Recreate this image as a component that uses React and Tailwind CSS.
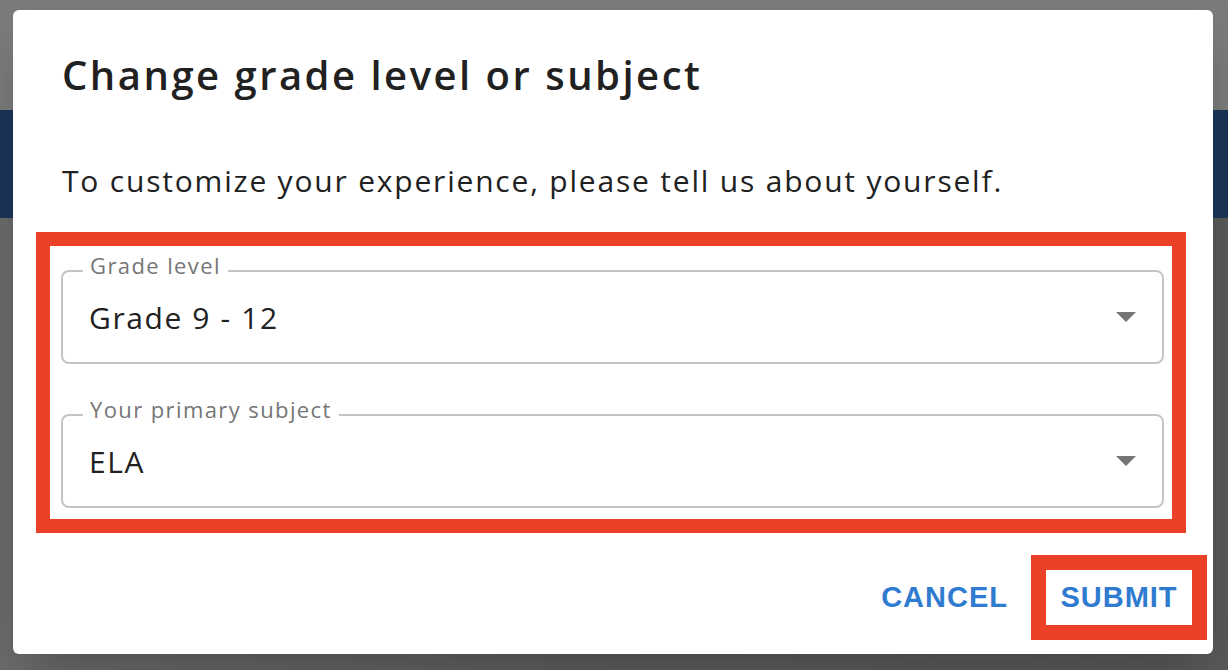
import React from "react";

const Caret = () => (
  <svg width="20" height="10" viewBox="0 0 20 10" className="shrink-0">
    <path d="M0 0 L20 0 L10 10 Z" fill="#757575" />
  </svg>
);

const OutlinedSelect = ({ label, value }) => (
  <div className="relative h-[94px] rounded-[8px] border-2 border-[#c4c4c4] flex items-center pl-[26px] pr-[26px]">
    <span className="absolute -top-[22px] left-[20px] bg-white px-[7px] text-[22px] leading-[30px] tracking-[1.4px] text-[#767676]">
      {label}
    </span>
    <span className="flex-1 text-[30px] text-[#212121] tracking-[1.6px]">{value}</span>
    <Caret />
  </div>
);

export default function App() {
  return (
    <div
      className="relative w-[1228px] h-[670px] overflow-hidden flex flex-col"
      style={{ fontFamily: "'Open Sans', 'Noto Sans', sans-serif" }}
    >
      {/* dimmed page behind the dialog */}
      <div className="h-[110px] bg-[#7b7b7b]" />
      <div className="h-[108px] bg-[#1a3558]" />
      <div className="flex-1 bg-gradient-to-r from-[#6a6b6b] via-[#5b5c5c] to-[#585959]" />

      {/* dialog */}
      <div className="absolute left-[13px] top-[10px] w-[1200px] h-[644px] bg-white rounded-[6px] shadow-2xl flex flex-col">
        <h2 className="pl-[49px] pt-[40px] text-[40px] font-semibold text-[#212121] leading-[50px] tracking-[2.5px]">
          Change grade level or subject
        </h2>

        <p className="pl-[49px] mt-[61px] text-[30px] text-[#212121] leading-[40px] tracking-[1.8px]">
          To customize your experience, please tell us about yourself.
        </p>

        <div className="ml-[23px] mt-[31px] w-[1150px] border-[14px] border-[#ea4127] bg-white pl-[11px] pr-[8px] pt-[24px] pb-[11px] flex flex-col gap-[50px]">
          <OutlinedSelect label="Grade level" value="Grade 9 - 12" />
          <OutlinedSelect label="Your primary subject" value="ELA" />
        </div>

        <div className="flex justify-end items-center mt-[22px] pr-[6px] gap-[23px]">
          <button
            className="text-[29px] font-bold text-[#2f7bd0] tracking-[1px]"
            style={{ fontFamily: "'Liberation Sans', Arial, sans-serif" }}
          >
            CANCEL
          </button>
          <div className="border-[15px] border-[#ea4127] w-[176px] h-[85px] flex items-center justify-center">
            <button
              className="text-[29px] font-bold text-[#2f7bd0] tracking-[1px]"
              style={{ fontFamily: "'Liberation Sans', Arial, sans-serif" }}
            >
              SUBMIT
            </button>
          </div>
        </div>
      </div>
    </div>
  );
}
